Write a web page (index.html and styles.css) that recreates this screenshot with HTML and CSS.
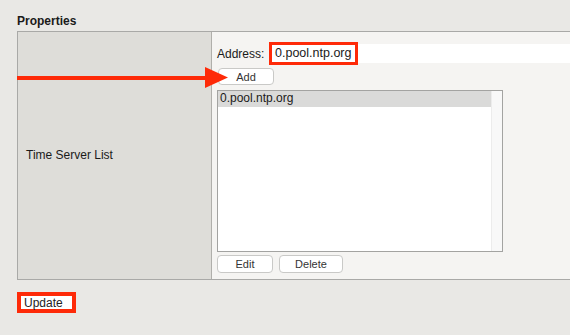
FILE: index.html
```html
<!DOCTYPE html>
<html>
<head>
    <title>Time Server Properties</title>
    <link rel="stylesheet" href="styles.css">
</head>
<body>
    <h2 class="title">Properties</h2>
    <div class="props">
        <div class="prop-name">Time Server List</div>
        <div class="prop-value">
            <div class="addr-row">
                <span class="addr-label">Address:</span>
                <div class="addr-field"><span class="mark">0.pool.ntp.org</span></div>
            </div>
            <button class="btn btn-add">Add</button>
            <div class="list">
                <div class="list-items">
                    <div class="list-item selected">0.pool.ntp.org</div>
                </div>
                <div class="list-track"></div>
            </div>
            <div class="list-actions">
                <button class="btn btn-edit">Edit</button>
                <button class="btn btn-delete">Delete</button>
            </div>
        </div>
    </div>
    <div class="footer">
        <span class="mark-box"><button class="btn btn-update">Update</button></span>
    </div>

    <!-- callout arrow pointing at the Add button -->
    <svg class="arrow" width="212" height="22" viewBox="0 0 212 22">
        <rect x="0" y="9" width="190" height="4" fill="#fe2a08"/>
        <polygon points="188,0 211,10.5 188,21" fill="#fe2a08"/>
    </svg>
</body>
</html>
```

FILE: styles.css
```css
html, body { margin: 0; padding: 0; }
body { background: #e9e8e5; font-family: "Liberation Sans", Arial, sans-serif; color: #1a1a1a; width: 570px; height: 335px; overflow: hidden; position: relative; padding-left: 17px; box-sizing: border-box; }
.title { font-size: 12px; font-weight: bold; margin: 0; padding-top: 14px; height: 17px; line-height: 14px; }
.props { display: flex; width: 553px; height: 249px; border: 1px solid #a9a9a7; border-right: none; box-sizing: border-box; }
.prop-name { width: 194px; background: #deddd9; border-right: 1px solid #b0afab; display: flex; align-items: center; padding-left: 8px; padding-bottom: 2px; box-sizing: border-box; font-size: 12px; }
.prop-value { flex: 1; min-width: 0; background: #f5f4f2; padding: 10px 0 0 5px; display: flex; flex-direction: column; align-items: flex-start; }
.addr-row { display: flex; align-items: center; width: 100%; height: 23px; }
.addr-label { font-size: 12px; width: 52px; }
.addr-field { flex: 1; background: #fff; height: 19px; display: flex; align-items: center; }
.mark { display: block; height: 23px; width: 89px; border: 3px solid #fe2a08; box-sizing: border-box; font-size: 12.5px; line-height: 17px; padding-left: 3px; background: #fff; white-space: nowrap; }
.btn { font-family: "Liberation Sans", Arial, sans-serif; font-size: 11px; color: #333; background: #fff; border: 1px solid #c9c9c7; border-radius: 4px; padding: 0; height: 18px; line-height: 16px; }
.btn-add { width: 56px; height: 17px; margin-top: 3px; margin-left: 1px; }
.list { display: flex; width: 286px; height: 162px; border: 1px solid #a3a3a1; box-sizing: border-box; background: #fff; margin-top: 5px; }
.list-items { flex: 1; }
.list-item { font-size: 12px; height: 16px; line-height: 15px; padding-left: 2px; }
.list-item.selected { background: #dadad9; }
.list-track { width: 10px; background: #f8f8f8; border-left: 1px solid #ececec; }
.list-actions { display: flex; gap: 6px; margin-top: 3px; }
.btn-edit { width: 56px; }
.btn-delete { width: 64px; }
.footer { padding-top: 12px; }
.mark-box { display: inline-block; border: 4px solid #fe2a08; background: #fff; }
.btn-update { display: block; width: 51px; height: 13px; line-height: 12px; font-size: 12px; border: none; border-radius: 0; text-align: left; padding-left: 3px; color: #222; }
.arrow { position: absolute; left: 17px; top: 67px; }
```
